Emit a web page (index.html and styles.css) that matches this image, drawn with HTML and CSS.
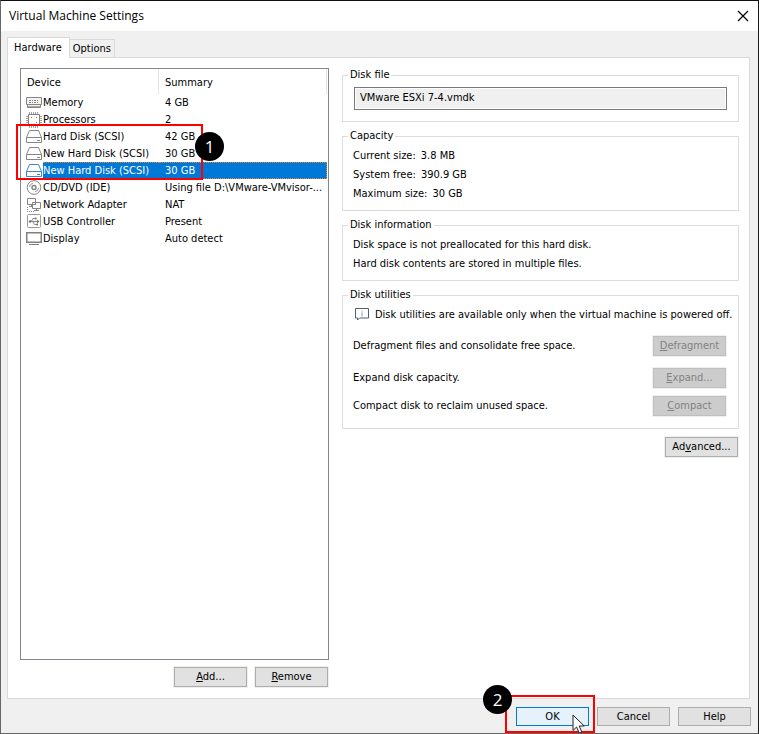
FILE: index.html
```html
<!DOCTYPE html>
<html lang="en">
<head>
<meta charset="utf-8">
<title>Virtual Machine Settings</title>
<link rel="stylesheet" href="styles.css">
</head>
<body>
<main class="window">
  <header class="titlebar">
    <h1 class="title">Virtual Machine Settings</h1>
    <button class="close" type="button" aria-label="Close">
      <svg width="12" height="12" viewBox="0 0 12 12"><path d="M1 1l10 10M11 1L1 11" stroke="#000" stroke-width="1.2" fill="none"/></svg>
    </button>
  </header>

  <div class="tabs" role="tablist">
    <button class="tab tab-active" type="button" role="tab" aria-selected="true">Hardware</button>
    <button class="tab" type="button" role="tab" aria-selected="false">Options</button>
  </div>

  <div class="panel" role="tabpanel">
    <section class="devices">
      <div class="list">
        <table class="table">
          <colgroup><col class="col-device"><col></colgroup>
          <thead>
            <tr><th>Device</th><th>Summary</th></tr>
          </thead>
          <tbody>
            <tr>
              <td><span class="device"><svg class="icon" viewBox="0 0 16 16"><path d="M.5 2.500h15v7H.5zM1.500 9.500v3h13v-3" fill="#f2f2f2" stroke="#858585"/><path d="M3 5.500h10M3 7.500h10" stroke="#858585" stroke-dasharray="2 1 1 1" fill="none"/><path d="M2 11.500h12" stroke="#a8a8a8"/></svg><span class="name">Memory</span></span></td>
              <td>4 GB</td>
            </tr>
            <tr>
              <td><span class="device"><svg class="icon" viewBox="0 0 16 16"><path d="M3.500 0v16M5.500 0v16M7.500 0v16M9.500 0v16M11.500 0v16M0 4.500h16M0 6.500h16M0 8.500h16M0 10.500h16M0 12.500h16" stroke="#a0a0a0" fill="none"/><path d="M2.500 2.500h11v11h-11z" fill="#fff" stroke="#808080"/><path d="M5 5h1v1H5zM10 10h1v1h-1zM10 5h1v1h-1z" fill="#777"/></svg><span class="name">Processors</span></span></td>
              <td>2</td>
            </tr>
            <tr>
              <td><span class="device"><svg class="icon" viewBox="0 0 16 16"><path d="M3.500 1.500h9l3 7v5H.5v-5z" fill="#fff" stroke="#858585"/><path d="M.5 8.500h15" stroke="#858585"/><path d="M11 11.500h3" stroke="#858585"/></svg><span class="name">Hard Disk (SCSI)</span></span></td>
              <td>42 GB</td>
            </tr>
            <tr>
              <td><span class="device"><svg class="icon" viewBox="0 0 16 16"><path d="M3.500 1.500h9l3 7v5H.5v-5z" fill="#fff" stroke="#858585"/><path d="M.5 8.500h15" stroke="#858585"/><path d="M11 11.500h3" stroke="#858585"/></svg><span class="name">New Hard Disk (SCSI)</span></span></td>
              <td>30 GB</td>
            </tr>
            <tr class="selected" aria-selected="true">
              <td><span class="device"><svg class="icon" viewBox="0 0 16 16"><path d="M3.500 1.500h9l3 7v5H.5v-5z" fill="#fff" stroke="#3c88c8"/><path d="M.5 8.500h15" stroke="#3c88c8"/><path d="M11 11.500h3" stroke="#3c88c8"/></svg><span class="name">New Hard Disk (SCSI)</span></span></td>
              <td>30 GB</td>
            </tr>
            <tr>
              <td><span class="device"><svg class="icon" viewBox="0 0 16 16"><circle cx="8" cy="7.500" r="6.800" fill="#fff" stroke="#858585"/><circle cx="8" cy="7.500" r="2" fill="none" stroke="#858585" stroke-width="1.400"/><path d="M3.500 7A4.500 4.500 0 0 1 7 3.200M12.500 8A4.500 4.500 0 0 1 9 11.800" fill="none" stroke="#999"/></svg><span class="name">CD/DVD (IDE)</span></span></td>
              <td>Using file D:\VMware-VMvisor-...</td>
            </tr>
            <tr>
              <td><span class="device"><svg class="icon" viewBox="0 0 16 16"><path d="M1.500 1.500h8v6h-8zM3 9.500h4M5.500 7.500v2M6.500 5.500h8v6h-8zM10.500 11.500v2M8 13.500h5" fill="#fff" stroke="#858585"/><path d="M1.500 10v4.500H8" fill="none" stroke="#858585" stroke-dasharray="1 1"/></svg><span class="name">Network Adapter</span></span></td>
              <td>NAT</td>
            </tr>
            <tr>
              <td><span class="device"><svg class="icon" viewBox="0 0 16 16"><rect x="1.500" y=".5" width="13" height="13" rx="1" fill="#fff" stroke="#999"/><path d="M4 7.500h8M5.500 7l1.500-2.500h2M7 8l1.500 2.500H11" fill="none" stroke="#858585"/><path d="M11 5.500l2.500 2-2.500 2zM9 3.500h1.500v2H9zM10.500 9.500H12v2h-1.500z" fill="#777"/><circle cx="4" cy="7.500" r="1.300" fill="#777"/></svg><span class="name">USB Controller</span></span></td>
              <td>Present</td>
            </tr>
            <tr>
              <td><span class="device"><svg class="icon" viewBox="0 0 16 16"><path d="M.75 1.750h14.500v9.500H.75z" fill="#fff" stroke="#808080" stroke-width="1.500"/><path d="M3 13.500h10" stroke="#808080"/></svg><span class="name">Display</span></span></td>
              <td>Auto detect</td>
            </tr>
          </tbody>
        </table>
        <div class="callout callout-disks"><span class="badge">1</span></div>
      </div>
      <div class="actions">
        <button class="btn" type="button"><u>A</u>dd...</button>
        <button class="btn" type="button"><u>R</u>emove</button>
      </div>
    </section>

    <section class="details">
      <fieldset class="group group-file">
        <legend>Disk file</legend>
        <input class="file" type="text" readonly aria-label="Disk file" value="VMware ESXi 7-4.vmdk">
      </fieldset>
      <fieldset class="group">
        <legend>Capacity</legend>
        <p><span>Current size:</span><span>3.8 MB</span></p>
        <p><span>System free:</span><span>390.9 GB</span></p>
        <p><span>Maximum size:</span><span>30 GB</span></p>
      </fieldset>
      <fieldset class="group">
        <legend>Disk information</legend>
        <p>Disk space is not preallocated for this hard disk.</p>
        <p>Hard disk contents are stored in multiple files.</p>
      </fieldset>
      <fieldset class="group group-utilities">
        <legend>Disk utilities</legend>
        <p class="note"><svg class="info" width="14" height="13" viewBox="0 0 14 13"><path d="M.5.5h13v9.500h-9l-2 2v-2h-2z" fill="#fff" stroke="#4f5f6f"/><path d="M7 2.500v1M7 4.500v4" stroke="#8a949e"/></svg>Disk utilities are available only when the virtual machine is powered off.</p>
        <div class="utility"><span>Defragment files and consolidate free space.</span><button class="btn" type="button" disabled><u>D</u>efragment</button></div>
        <div class="utility"><span>Expand disk capacity.</span><button class="btn" type="button" disabled><u>E</u>xpand...</button></div>
        <div class="utility utility-last"><span>Compact disk to reclaim unused space.</span><button class="btn" type="button" disabled><u>C</u>ompact</button></div>
      </fieldset>
      <button class="btn advanced" type="button">Ad<u>v</u>anced...</button>
    </section>
  </div>

  <footer class="footer">
    <div class="confirm">
      <button class="btn btn-default" type="button">OK</button>
      <div class="callout callout-ok"><span class="badge">2</span></div>
      <svg class="cursor" width="14" height="20" viewBox="0 0 14 20"><path d="M1 1v15.500l3.600-3.500 2.600 6 2.600-1.100-2.600-5.900h5z" fill="#fff" stroke="#222"/></svg>
    </div>
    <button class="btn" type="button">Cancel</button>
    <button class="btn" type="button">Help</button>
  </footer>
</main>
</body>
</html>
```
FILE: styles.css
```css
* {
  box-sizing: border-box;
}

body {
  margin: 0;
  color: #000;
  font: 11px/14px "DejaVu Sans Condensed", "Noto Sans", sans-serif;
}

button,
input {
  color: inherit;
  font: inherit;
}

.window {
  display: flex;
  flex-direction: column;
  min-height: 100vh;
  border: 1px solid #666;
  border-top-color: #111;
  border-right-color: #1a1a1a;
  background: #f0f0f0;
  overflow: hidden;
}

.titlebar {
  display: flex;
  align-items: center;
  justify-content: space-between;
  height: 30px;
  padding: 0 8px;
  background: #fff;
}

.title {
  margin: 0;
  font: 12px/16px "Open Sans", "Noto Sans", sans-serif;
}

.close {
  display: flex;
  padding: 1px;
  border: 0;
  background: none;
}

.tabs {
  display: flex;
  align-items: flex-end;
  margin-top: 6px;
  padding: 0 6px;
}

.tab {
  height: 18px;
  padding: 1px 3px 0;
  border: 1px solid #d9d9d9;
  border-width: 1px 1px 0 0;
  background: #f0f0f0;
}

.tab-active {
  z-index: 1;
  height: 21px;
  margin-bottom: -1px;
  padding: 0 7px 1px 6px;
  border-left-width: 1px;
  background: #fff;
}

.panel {
  display: flex;
  flex: 1;
  gap: 13px;
  margin: 0 8px 0 6px;
  padding: 10px 10px 10px 12px;
  border: 1px solid #d9d9d9;
  background: #fff;
}

.devices {
  display: flex;
  flex-direction: column;
  flex: 309 1 0;
  min-width: 0;
}

.list {
  position: relative;
  flex: 1;
  padding-right: 1px;
  border: 1px solid #828790;
}

.table {
  width: 100%;
  border-collapse: separate;
  border-spacing: 0;
  table-layout: fixed;
}

.col-device {
  width: 138px;
}

th {
  height: 25px;
  padding: 2px 6px 0;
  border-right: 1px solid #e5e5e5;
  font-weight: 400;
  text-align: left;
}

td {
  height: 17px;
  padding: 1px 0 1px 6px;
  line-height: 15px;
  white-space: nowrap;
}

td:first-child {
  padding: 0 0 0 5px;
}

.device {
  display: flex;
  align-items: center;
  gap: 1px;
}

.name {
  flex: 1;
  padding: 1px 0;
}

.icon {
  flex: none;
  width: 16px;
  height: 16px;
}

.selected {
  color: #fff;
}

.selected .name,
.selected td:last-child {
  padding-top: 0;
  padding-bottom: 0;
  border: 1px dotted #e8872b;
  border-width: 1px 0;
  background: #0078d7;
}

.selected td:last-child {
  border-right-width: 1px;
}

.actions {
  display: flex;
  justify-content: flex-end;
  gap: 8px;
  padding: 7px 1px 1px 0;
}

.btn {
  width: 73px;
  height: 20px;
  padding: 0;
  border: 1px solid #adadad;
  outline: 1px solid #f0f0f0;
  background: #e1e1e1;
  text-align: center;
}

.btn:disabled {
  border-color: #bfbfbf;
  background: #ccc;
  color: #838383;
}

.btn-default {
  border-color: #0078d7;
  background: #e5f1fb;
}

.details {
  display: flex;
  flex-direction: column;
  flex: 397 1 0;
  gap: 7px;
  min-width: 0;
}

.group {
  min-width: 0;
  margin: 0;
  padding: 3px 10px 7px;
  border: 1px solid #dcdcdc;
}

.group legend {
  margin-left: -5px;
  padding: 0 2px;
}

.group p {
  display: flex;
  gap: 5px;
  margin: 0;
  line-height: 19px;
}

.group-file {
  padding: 5px 11px 11px;
}

.group-file legend {
  margin-left: -6px;
}

.file {
  display: block;
  width: 100%;
  height: 23px;
  padding: 0 5px 2px;
  border: 1px solid #7a7a7a;
  box-shadow: inset 0 0 0 1px #fff;
  background: #f0f0f0;
}

.group-utilities {
  padding-bottom: 12px;
}

.group .note {
  align-items: center;
  gap: 6px;
  white-space: nowrap;
}

.info {
  flex: none;
  margin-left: 2px;
}

.utility {
  display: flex;
  align-items: center;
  justify-content: space-between;
  margin-top: 12px;
  padding-right: 2px;
}

.utility-last {
  margin-top: 8px;
}

.advanced {
  align-self: flex-end;
  margin: 1px 1px 0 0;
}

.footer {
  display: flex;
  justify-content: flex-end;
  gap: 8px;
  padding: 8px 7px 7px;
}

.footer .btn {
  display: block;
  height: 19px;
}

.confirm {
  position: relative;
}

.callout {
  position: absolute;
  border: 2px solid #f00;
  pointer-events: none;
}

.callout-disks {
  top: 55px;
  left: -5px;
  width: 187px;
  height: 56px;
}

.callout-ok {
  inset: -12px -6px -7px -11px;
}

.badge {
  position: absolute;
  display: grid;
  place-items: center;
  width: 29px;
  height: 29px;
  border-radius: 50%;
  background: #000;
  color: #fff;
  font: 17px/20px "Open Sans", sans-serif;
}

.callout-disks .badge {
  top: 6px;
  right: -23px;
}

.callout-ok .badge {
  top: -12px;
  left: -24px;
}

.cursor {
  position: absolute;
  top: 7px;
  right: 3px;
}
```
